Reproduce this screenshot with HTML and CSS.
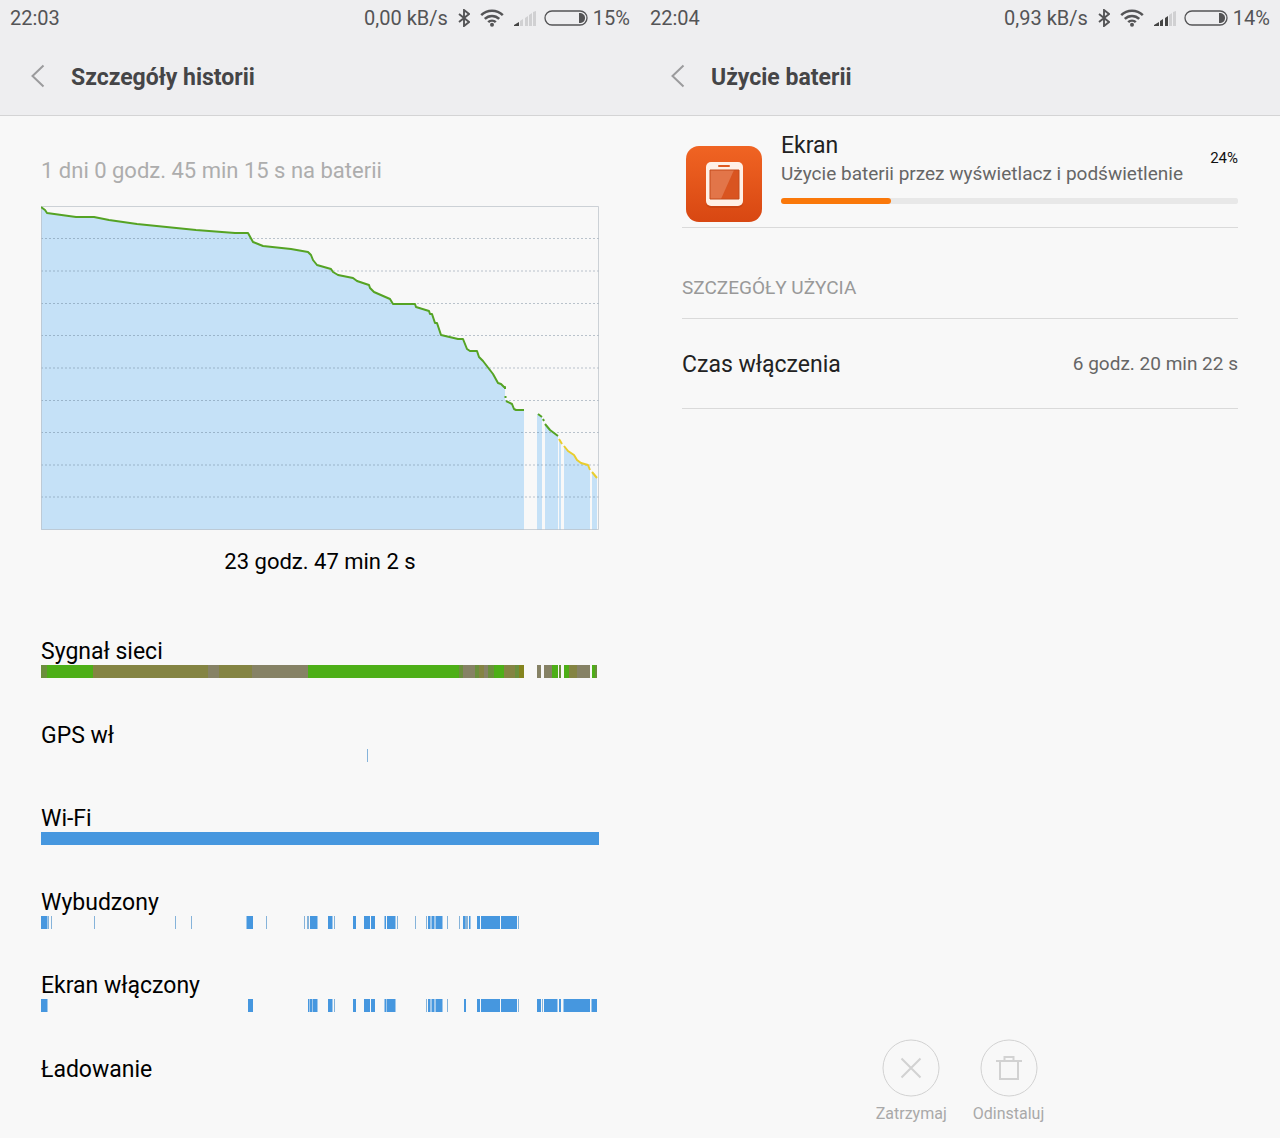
FILE: index.html
```
<!DOCTYPE html>
<html lang="pl">
<head>
    <meta charset="UTF-8">
    <title>Użycie baterii</title>
    <meta name="viewport" content="width=device-width, initial-scale=1.0">
    <link rel="stylesheet" href="styles.css">
</head>
<body>
<!-- shared icons -->
<svg class="icon-defs" aria-hidden="true">
    <symbol id="icon-bluetooth" viewBox="0 0 12 18">
        <path d="M1 5l10 8-5 4V1l5 4-10 8" fill="none" stroke="currentColor" stroke-width="1.9"/>
    </symbol>
    <symbol id="icon-wifi" viewBox="0 0 24 18">
        <path d="M1.2 6.2a15.3 15.3 0 0 1 21.6 0M4.800 9.900a10.2 10.2 0 0 1 14.4 0M8.2 13.2a5.4 5.4 0 0 1 7.6 0" fill="none" stroke="currentColor" stroke-width="2.500"/>
        <circle cx="12" cy="15.8" r="2" fill="currentColor"/>
    </symbol>
    <symbol id="icon-battery" viewBox="0 0 44 16">
        <rect x="1" y="1" width="42" height="14" rx="7" fill="none" stroke="currentColor" stroke-width="1.3"/>
        <path d="M35 3c4 0 6 2 6 5s-2 5-6 5z" fill="currentColor"/>
    </symbol>
    <symbol id="icon-back" viewBox="0 0 14 24">
        <path d="M12.500 1.500L1.500 12l11 10.500" fill="none" stroke="currentColor" stroke-width="2"/>
    </symbol>
</svg>
<main class="screens">
    <section class="screen">
        <header class="top">
            <div class="status">
                <span class="clock">22:03</span>
                <span>0,00 kB/s</span>
                <svg class="bluetooth"><use href="#icon-bluetooth"/></svg>
                <svg class="wifi"><use href="#icon-wifi"/></svg>
                <svg class="signal" viewBox="0 0 22 15">
                    <path class="on" d="M0 15v-1l5-3v4z"/>
                    <path class="off" d="M6 15v-5l3-2v7zM11 15V7l3-2v10zM15 15V4l3-2v13zM19 15V1l3-1v15z"/>
                </svg>
                <svg class="battery"><use href="#icon-battery"/></svg>
                <span>15%</span>
            </div>
            <div class="title-bar">
                <button class="back" type="button" aria-label="Wstecz"><svg><use href="#icon-back"/></svg></button>
                <h1>Szczegóły historii</h1>
            </div>
        </header>
        <div class="history">
            <p class="on-battery">1 dni 0 godz. 45 min 15 s na baterii</p>
            <svg class="chart" viewBox="0 0 558 324" preserveAspectRatio="none">
                <path class="area" d="M0 324V1l4 3 2 3 29 4h18l15 3 28 4 59 6 39 3h13l5 9 10 4 28 3 17 3 3 3 2 5 4 5 14 4 2 3 5 3 15 3 4 3 12 4 1 3 4 4 16 7 3 5h22l1 3 13 4 1 3h2l3 9h2l4 12 17 4h5l4 10 3 2h7l2 6 4 4 10 13 5 9 3 1 3 3h1v13l7 4 2 5 2 1h8v120z"/>
                <path class="area" d="M496 324V208l5 3v113zM504 324V218l5 6 8 6v94zM518 324v-90l2 4v86zM523 324v-84l4 5 6 4 3 5 4 3 7 2 2 5v60zM551 324v-58l5 6v52z"/>
                <path class="grid" d="M0 32.500h558M0 65h558M0 97.500h558M0 129.500h558M0 162h558M0 194.500h558M0 226.500h558M0 259h558M0 291h558"/>
                <path class="frame" d="M.5 .5h557v323H.5z"/>
                <path class="level" d="M0 1l4 3 2 3 29 4h18l15 3 28 4 59 6 39 3h13l5 9 10 4 28 3 17 3 3 3 2 5 4 5 14 4 2 3 5 3 15 3 4 3 12 4 1 3 4 4 16 7 3 5h22l1 3 13 4 1 3h2l3 9h2l4 12 17 4h5l4 10 3 2h7l2 6 4 4 10 13 5 9 3 1 3 3h1v2M464.500 190v2M465 195l6 3 2 5 2 1h8M497 208l4 3M502 213l1 2M504 218l5 6 8 6"/>
                <path class="level low" d="M518 233l3 5M523 240l4 5 6 4 3 5 4 3 7 2 2 5M551 266l5 6"/>
            </svg>
            <p class="duration">23 godz. 47 min 2 s</p>
            <ul class="events">
                <li>
                    <h2>Sygnał sieci</h2>
                    <svg class="track" viewBox="0 0 558 13" preserveAspectRatio="none">
                        <path class="good" d="M6 0h46v13H6zM267 0h151v13H267zM453 0h10v13h-10zM511 0h6v13h-6zM523 0h5v13h-5zM551 0h3v13h-3z"/>
                        <path class="fair" d="M0 0h6v13H0zM418 0h4v13h-4zM434 0h4v13h-4zM447 0h6v13h-6zM474 0h4v13h-4zM518 0h2v13h-2zM554 0h2v13h-2z"/>
                        <path class="weak" d="M52 0h115v13H52zM178 0h33v13h-33zM438 0h5v13h-5zM463 0h11v13h-11zM528 0h8v13h-8z"/>
                        <path class="poor" d="M167 0h11v13h-11zM211 0h56v13h-56zM422 0h12v13h-12zM443 0h4v13h-4zM496 0h4v13h-4zM503 0h8v13h-8zM536 0h13v13h-13z"/>
                        <path class="edge" d="M478 0h5v13h-5z"/>
                    </svg>
                </li>
                <li>
                    <h2>GPS wł</h2>
                    <svg class="track" viewBox="0 0 558 13" preserveAspectRatio="none">
                        <path class="short" d="M326 0h1v13h-1z"/>
                    </svg>
                </li>
                <li>
                    <h2>Wi-Fi</h2>
                    <svg class="track" viewBox="0 0 558 13" preserveAspectRatio="none">
                        <path class="active" d="M0 0h558v13H0z"/>
                    </svg>
                </li>
                <li>
                    <h2>Wybudzony</h2>
                    <svg class="track" viewBox="0 0 558 13" preserveAspectRatio="none">
                        <path class="active" d="M0 0h6.500v13H0zM205.500 0h6.500v13h-6.500zM269 0h7.500v13H269zM287 0h4.500v13H287zM312 0h3v13h-3zM323 0h6v13h-6zM330 0h4v13h-4zM343.500 0h1.500v13h-1.500zM346 0h8.500v13H346zM387 0h2.500v13H387zM390.500 0h3v13h-3zM394.500 0h7v13h-7zM422 0h2v13h-2zM428 0h1.500v13H428zM436 0h3v13h-3zM440 0h19v13h-19zM460 0h16v13h-16z"/>
                        <path class="short" d="M7 0h1v13H7zM10 0h1v13h-1zM53 0h1v13h-1zM134 0h1v13h-1zM150 0h1v13h-1zM225 0h1v13h-1zM263 0h1v13h-1zM266 0h2v13h-2zM293 0h1v13h-1zM356 0h1v13h-1zM374 0h1v13h-1zM385 0h1v13h-1zM406 0h1v13h-1zM418 0h1v13h-1zM424 0h3v13h-3zM477 0h1v13h-1z"/>
                    </svg>
                </li>
                <li>
                    <h2>Ekran włączony</h2>
                    <svg class="track" viewBox="0 0 558 13" preserveAspectRatio="none">
                        <path class="active" d="M0 0h6.500v13H0zM207 0h5v13h-5zM267 0h1.500v13H267zM269 0h2.500v13H269zM272 0h4.500v13H272zM287 0h4.500v13H287zM312 0h3v13h-3zM323 0h6v13h-6zM330 0h4v13h-4zM343.500 0h1.500v13h-1.500zM345.500 0h9v13h-9zM387 0h2.500v13H387zM390.500 0h3v13h-3zM394.500 0h7v13h-7zM423 0h2v13h-2zM436 0h3v13h-3zM440 0h19v13h-19zM460 0h16v13h-16zM496 0h4v13h-4zM503 0h13.500v13H503zM518 0h2v13h-2zM522.500 0h26.500v13h-26.500zM550.500 0h5.500v13h-5.500z"/>
                        <path class="short" d="M293 0h1v13h-1zM385 0h1v13h-1zM406 0h1v13h-1zM477 0h1v13h-1zM501 0h1v13h-1z"/>
                    </svg>
                </li>
                <li>
                    <h2>Ładowanie</h2>
                </li>
            </ul>
        </div>
    </section>
    <section class="screen">
        <header class="top">
            <div class="status">
                <span class="clock">22:04</span>
                <span>0,93 kB/s</span>
                <svg class="bluetooth"><use href="#icon-bluetooth"/></svg>
                <svg class="wifi"><use href="#icon-wifi"/></svg>
                <svg class="signal" viewBox="0 0 22 15">
                    <path class="on" d="M0 15v-1l5-3v4zM6 15v-5l3-2v7zM11 15V7l3-2v10z"/>
                    <path class="off" d="M15 15V4l3-2v13zM19 15V1l3-1v15z"/>
                </svg>
                <svg class="battery"><use href="#icon-battery"/></svg>
                <span>14%</span>
            </div>
            <div class="title-bar">
                <button class="back" type="button" aria-label="Wstecz"><svg><use href="#icon-back"/></svg></button>
                <h1>Użycie baterii</h1>
            </div>
        </header>
        <div class="usage">
            <div class="app">
                <svg class="app-icon" viewBox="0 0 76 76">
                    <defs>
                        <linearGradient id="orange" x1="0" y1="0" x2="0" y2="1">
                            <stop offset="0" stop-color="#f06423"/>
                            <stop offset="1" stop-color="#d84712"/>
                        </linearGradient>
                    </defs>
                    <rect width="76" height="76" rx="13" fill="url(#orange)"/>
                    <rect x="20" y="18" width="37" height="44" rx="5" fill="#b93b0d" opacity=".5"/>
                    <rect x="20" y="16" width="37" height="44" rx="5" fill="#fff0e6"/>
                    <rect x="32" y="19" width="12" height="2" rx="1" fill="#e05a20"/>
                    <path d="M24 24h29v29H24z" fill="#d95420"/>
                    <path d="M24 24h24L35 53H24z" fill="#e27549"/>
                    <path d="M24 24h29v29H24z" fill="none" stroke="#c44a1a"/>
                </svg>
                <div class="app-body">
                    <div class="app-text">
                        <div>
                            <h2 id="app-name">Ekran</h2>
                            <p>Użycie baterii przez wyświetlacz i podświetlenie</p>
                        </div>
                        <span class="percent">24%</span>
                    </div>
                    <progress max="100" value="24" aria-labelledby="app-name"></progress>
                </div>
            </div>
            <h3>SZCZEGÓŁY UŻYCIA</h3>
            <dl class="detail">
                <dt>Czas włączenia</dt>
                <dd>6 godz. 20 min 22 s</dd>
            </dl>
        </div>
        <footer class="actions">
            <button type="button" disabled>
                <svg viewBox="0 0 58 58">
                    <circle cx="29" cy="29" r="28" stroke-width="1"/>
                    <path d="M19.500 19.500l19 19M38.500 19.500l-19 19"/>
                </svg>
                Zatrzymaj
            </button>
            <button type="button" disabled>
                <svg viewBox="0 0 58 58">
                    <circle cx="29" cy="29" r="28" stroke-width="1"/>
                    <path d="M16 22h26M20 22v18h18V22M24.500 22v-4h9v4"/>
                </svg>
                Odinstaluj
            </button>
        </footer>
    </section>
</main>
</body>
</html>
```

FILE: styles.css
```
* {
    box-sizing: border-box;
}
body, h1, h2, h3, p, ul, dl, dd {
    margin: 0;
    padding: 0;
}
body {
    font-family: Roboto, "Noto Sans", sans-serif;
    background: #f8f8f8;
    color: #111;
}
svg {
    display: block;
    flex: none;
}
button {
    font: inherit;
    background: none;
    border: none;
    padding: 0;
    cursor: pointer;
}
.icon-defs {
    display: none;
}
.screens {
    display: flex;
    min-height: 100vh;
}
.screen {
    flex: 1;
    min-width: 0;
    display: flex;
    flex-direction: column;
}

/* status bar and title */
.top {
    background: #eeeef0;
    border-bottom: 1px solid #d4d4d5;
    color: #545456;
}
.status {
    display: flex;
    align-items: center;
    height: 36px;
    padding: 0 10px;
    font-size: 20px;
}
.clock {
    margin-right: auto;
}
.bluetooth {
    width: 12px;
    height: 18px;
    margin-left: 10px;
}
.wifi {
    width: 24px;
    height: 18px;
    margin-left: 10px;
}
.signal {
    width: 22px;
    height: 15px;
    margin: 0 8px 0 10px;
}
.signal .on {
    fill: #444;
}
.signal .off {
    fill: #d0d0d2;
}
.battery {
    width: 44px;
    height: 16px;
    margin-right: 5px;
}
.title-bar {
    display: flex;
    align-items: center;
    height: 79px;
    padding: 0 31px;
    gap: 26px;
}
.back {
    color: #9b9b9d;
}
.back svg {
    width: 14px;
    height: 24px;
}
h1 {
    padding-top: 4px;
    font-size: 23px;
    font-weight: 700;
    line-height: 28px;
    color: #454547;
}

/* history */
.history {
    flex: 1;
    display: flex;
    flex-direction: column;
    padding: 40px 41px 0;
}
.on-battery {
    font-size: 22px;
    line-height: 30px;
    color: #adadad;
}
.chart {
    width: 100%;
    height: 324px;
    margin-top: 20px;
}
.area {
    fill: #c5e1f7;
}
.grid {
    fill: none;
    stroke: #5b7186;
    stroke-opacity: .4;
    stroke-width: 1;
    stroke-dasharray: 2 2;
}
.frame {
    fill: none;
    stroke: #b9c1c8;
    stroke-opacity: .7;
}
.level {
    fill: none;
    stroke: #55a324;
    stroke-width: 2;
    stroke-linejoin: round;
}
.level.low {
    stroke: #e9cd2e;
}
.duration {
    margin-top: 17px;
    font-size: 22px;
    line-height: 30px;
    text-align: center;
    color: #000;
}
.events {
    flex: 1;
    display: grid;
    grid-auto-rows: 1fr;
    margin-top: 60px;
    list-style: none;
}
.events h2 {
    padding-top: 2px;
    font-size: 23px;
    font-weight: 400;
    line-height: 26px;
    color: #000;
}
.track {
    width: 100%;
    height: 13px;
}
.active {
    fill: #4697df;
}
.short {
    fill: #85b3da;
}
.good {
    fill: #4daf17;
}
.fair {
    fill: #6b8f3c;
}
.weak {
    fill: #848443;
}
.poor {
    fill: #868265;
}
.edge {
    fill: #84841e;
}

/* usage */
.usage {
    flex: 1;
    padding: 0 42px;
}
.app {
    display: flex;
    gap: 19px;
    height: 112px;
    padding: 15px 0 0 4px;
    border-bottom: 1px solid #dadada;
}
.app-icon {
    width: 76px;
    height: 76px;
    margin-top: 15px;
}
.app-body {
    flex: 1;
    min-width: 0;
}
.app-text {
    display: flex;
    justify-content: space-between;
    align-items: center;
}
.app h2 {
    font-size: 23px;
    font-weight: 400;
    line-height: 30px;
    color: #222;
}
.app p {
    font-size: 19px;
    line-height: 26px;
    color: #666;
}
.percent {
    font-size: 15px;
    line-height: 28px;
    margin-bottom: 3px;
}
progress {
    display: block;
    width: 100%;
    height: 6px;
    margin-top: 11px;
    border: none;
    border-radius: 3px;
    appearance: none;
    background: #e8e8e8;
}
progress::-webkit-progress-bar {
    border-radius: 3px;
    background: #e8e8e8;
}
progress::-webkit-progress-value {
    border-radius: 3px;
    background: #fa780a;
}
h3 {
    padding: 45px 0 15px;
    border-bottom: 1px solid #dadada;
    font-size: 19px;
    font-weight: 400;
    line-height: 30px;
    color: #999;
}
.detail {
    display: flex;
    justify-content: space-between;
    align-items: center;
    height: 90px;
    border-bottom: 1px solid #dadada;
}
.detail dt {
    padding-top: 2px;
    font-size: 23px;
    color: #222;
}
.detail dd {
    font-size: 19px;
    color: #666;
}
.actions {
    display: flex;
    justify-content: center;
    gap: 26px;
    padding-bottom: 14px;
}
.actions button {
    display: flex;
    flex-direction: column;
    align-items: center;
    gap: 6px;
    font-size: 16px;
    line-height: 21px;
    color: #a9a9a9;
    cursor: default;
}
.actions svg {
    width: 58px;
    height: 58px;
    fill: none;
    stroke: #d2d2d2;
    stroke-width: 2;
}
```
